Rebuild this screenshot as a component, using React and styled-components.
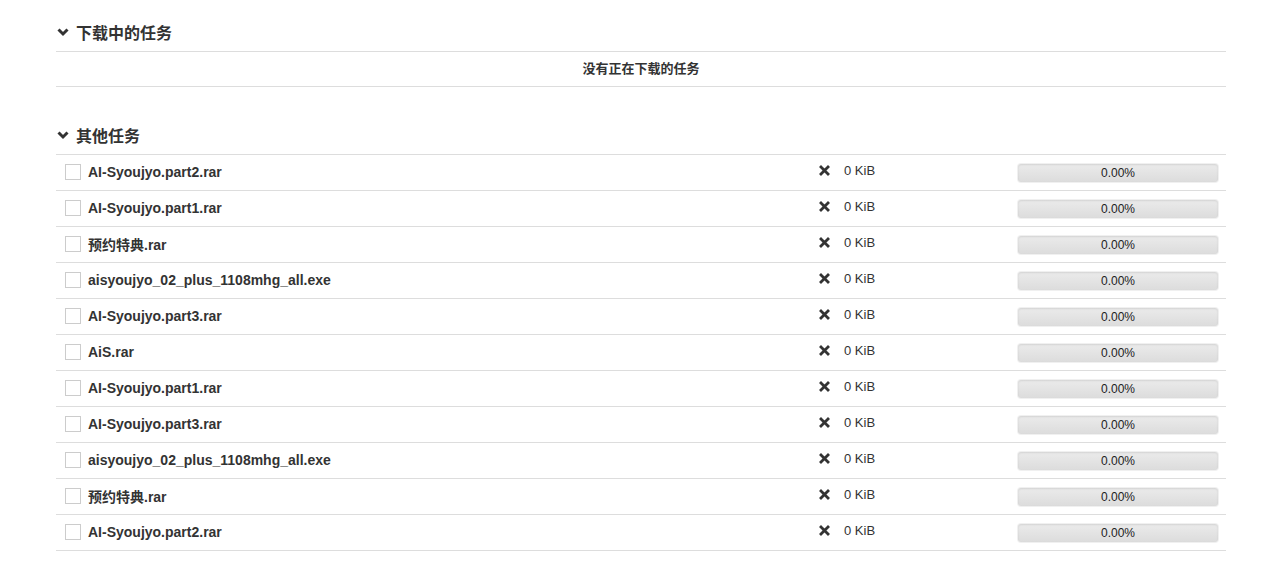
import React from "react";
import styled, { createGlobalStyle } from "styled-components";

const GlobalStyle = createGlobalStyle`
  body {
    margin: 0;
    background: #fff;
    color: #333;
    font-family: "Liberation Sans", Arial, "Noto Sans CJK SC", sans-serif;
    font-size: 13px;
  }
`;

const Page = styled.div`
  width: 1170px;
  margin: 0 auto;
  padding-top: 19px;
`;

const Section = styled.section`
  margin-bottom: 35px;
`;

const Heading = styled.h4`
  display: flex;
  align-items: center;
  margin: 0;
  height: 25px;
  padding-left: 1px;
  font-size: 16px;
  font-weight: bold;
  color: #333;
  border-bottom: 1px solid #ddd;
  padding-bottom: 7px;
  & svg {
    margin-right: 7px;
  }
`;

const Empty = styled.div`
  height: 34px;
  line-height: 34px;
  text-align: center;
  font-weight: bold;
  font-size: 13px;
  border-bottom: 1px solid #ddd;
`;

const Row = styled.div`
  box-sizing: border-box;
  display: flex;
  align-items: center;
  height: 36px;
  padding-bottom: 2px;
  border-bottom: 1px solid #ddd;
`;

const Check = styled.span`
  box-sizing: border-box;
  width: 16px;
  height: 16px;
  margin: 0 7px 0 9px;
  border: 1px solid #ccc;
  background: #fff;
  flex: none;
`;

const Name = styled.div`
  flex: 1;
  font-weight: bold;
  font-size: 14px;
`;

const Size = styled.div`
  width: 199px;
  display: flex;
  align-items: center;
  margin-top: -2px;
  color: #333;
  & svg {
    margin-right: 14px;
  }
`;

const Bar = styled.div`
  box-sizing: border-box;
  width: 200px;
  height: 18px;
  margin: 2px 8px 0 0;
  border-radius: 3px;
  background: linear-gradient(#ebebeb, #dcdcdc);
  box-shadow: inset 0 1px 2px rgba(0, 0, 0, 0.1), 0 0 0 1px rgba(0, 0, 0, 0.06);
  text-align: center;
  line-height: 18px;
  font-size: 12px;
  color: #222;
`;

const Chevron = () => (
  <svg width="12" height="10" viewBox="0 0 12 10">
    <path d="M1.5 2.5 L6 7 L10.5 2.5" fill="none" stroke="#333" strokeWidth="3" />
  </svg>
);

const Cross = () => (
  <svg width="11" height="11" viewBox="0 0 11 11">
    <path d="M2 2 L9 9 M9 2 L2 9" stroke="#333" strokeWidth="2.8" strokeLinecap="square" />
  </svg>
);

const files = [
  "AI-Syoujyo.part2.rar",
  "AI-Syoujyo.part1.rar",
  "预约特典.rar",
  "aisyoujyo_02_plus_1108mhg_all.exe",
  "AI-Syoujyo.part3.rar",
  "AiS.rar",
  "AI-Syoujyo.part1.rar",
  "AI-Syoujyo.part3.rar",
  "aisyoujyo_02_plus_1108mhg_all.exe",
  "预约特典.rar",
  "AI-Syoujyo.part2.rar",
];

export default () => (
  <>
    <GlobalStyle />
    <Page>
      <Section>
        <Heading>
          <Chevron />
          下载中的任务
        </Heading>
        <Empty>没有正在下载的任务</Empty>
      </Section>
      <Section>
        <Heading>
          <Chevron />
          其他任务
        </Heading>
        {files.map((f, i) => (
          <Row key={i}>
            <Check />
            <Name>{f}</Name>
            <Size>
              <Cross />0 KiB
            </Size>
            <Bar>0.00%</Bar>
          </Row>
        ))}
      </Section>
    </Page>
  </>
);
